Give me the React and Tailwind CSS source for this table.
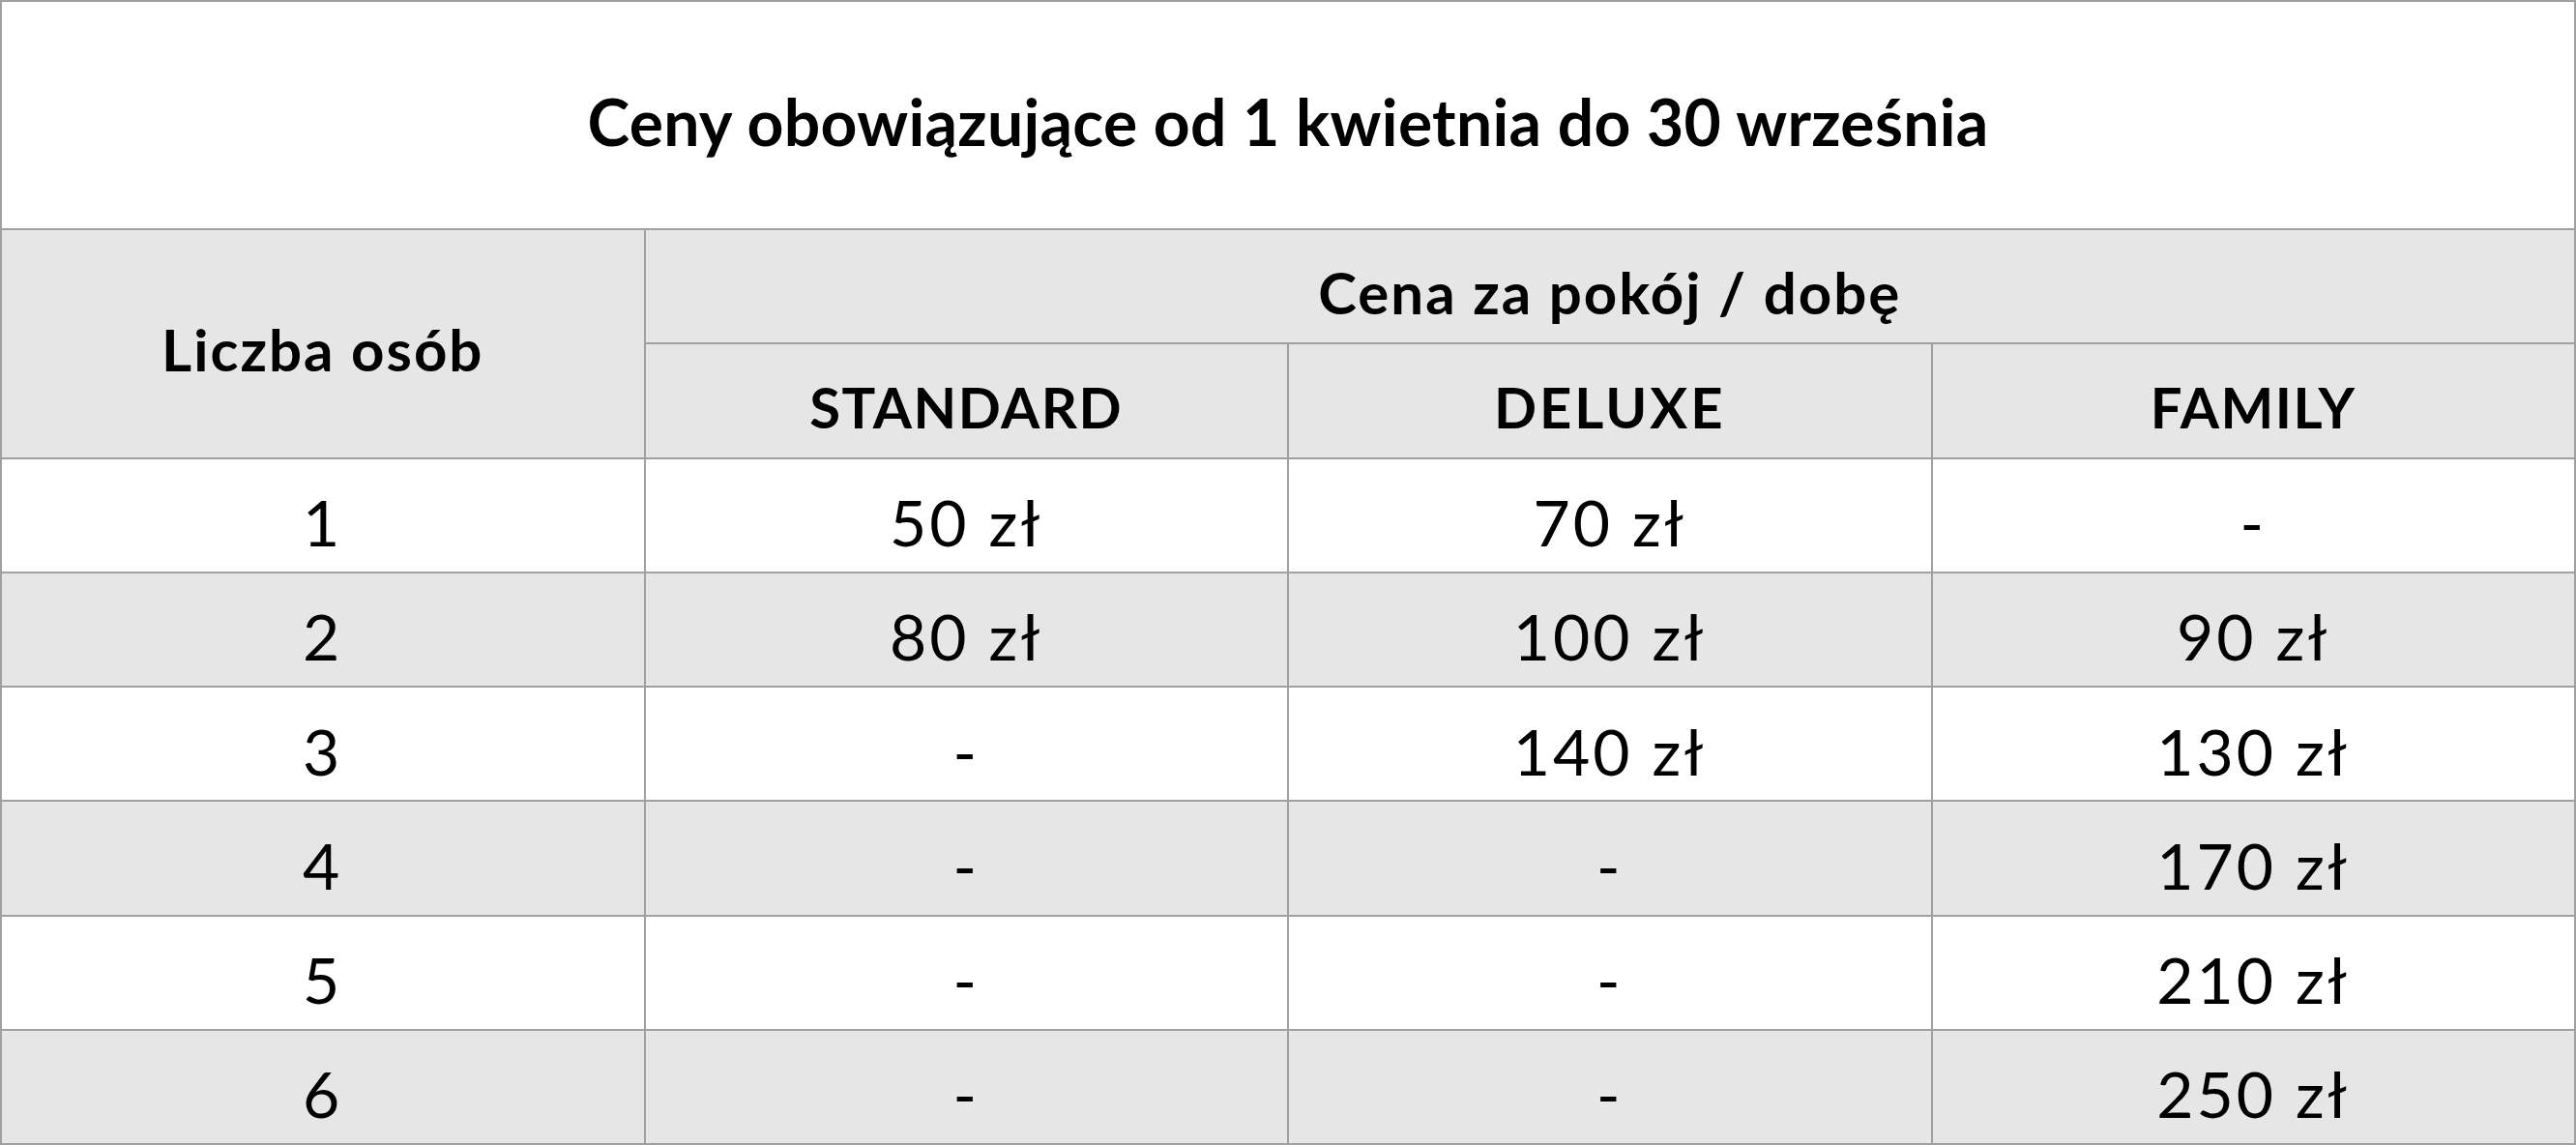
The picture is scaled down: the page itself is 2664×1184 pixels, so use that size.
import React from "react";

const rows = [
  ["1", "50 zł", "70 zł", "-"],
  ["2", "80 zł", "100 zł", "90 zł"],
  ["3", "-", "140 zł", "130 zł"],
  ["4", "-", "-", "170 zł"],
  ["5", "-", "-", "210 zł"],
  ["6", "-", "-", "250 zł"],
];

export default function App() {
  return (
    <div
      className="w-[2664px] h-[1184px] bg-white text-black border-t-2 border-l-2 border-[#a0a0a0] grid grid-cols-4 grid-rows-[236px_repeat(8,1fr)]"
      style={{ fontFamily: "Lato, 'Noto Sans', sans-serif" }}
    >
      <div className="col-span-4 border-r-2 border-b-2 border-[#a0a0a0] flex items-center justify-center pt-[12px] text-[66px] font-bold tracking-[0.3px]">
        Ceny obowiązujące od 1 kwietnia do 30 września
      </div>
      <div className="row-span-2 bg-[#e6e6e6] border-r-2 border-b-2 border-[#a0a0a0] flex items-center justify-center pt-[12px] text-[60px] font-bold tracking-[2px]">
        Liczba osób
      </div>
      <div className="col-span-3 bg-[#e6e6e6] border-r-2 border-b-2 border-[#a0a0a0] flex items-center justify-center pt-[12px] text-[60px] font-bold tracking-[2px]">
        Cena za pokój / dobę
      </div>
      {["STANDARD", "DELUXE", "FAMILY"].map((h) => (
        <div
          key={h}
          className={
            "bg-[#e6e6e6] border-r-2 border-b-2 border-[#a0a0a0] flex items-center justify-center pt-[12px] text-[58px] font-bold " +
            (h === "DELUXE" ? "tracking-[3px]" : "tracking-[1.5px]")
          }
        >
          {h}
        </div>
      ))}
      {rows.map((r, i) =>
        r.map((c, j) => (
          <div
            key={i + "-" + j}
            className={
              (i % 2 === 1 ? "bg-[#e6e6e6] " : "bg-white ") +
              "border-r-2 border-b-2 border-[#a0a0a0] flex items-center justify-center pt-[14px] text-[66px] font-normal tracking-[3px]"
            }
          >
            {c}
          </div>
        ))
      )}
    </div>
  );
}
